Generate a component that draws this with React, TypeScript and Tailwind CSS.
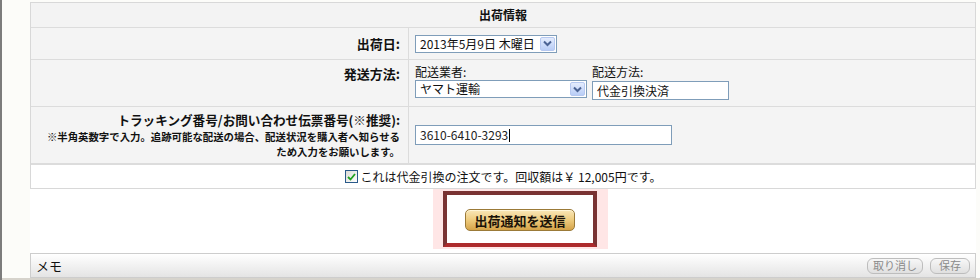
import React from "react";

const font = { fontFamily: '"Noto Sans CJK JP", "Noto Sans", sans-serif' };

const Arrow = () => (
	<span className="flex h-[14px] w-[15px] items-center justify-center rounded-[2px] border border-[#b6c8f0] bg-gradient-to-b from-[#e4ecfd] to-[#b9cdf6]">
		<svg width="9" height="7" viewBox="0 0 9 7">
			<path d="M1 1.5 L4.5 5 L8 1.5" fill="none" stroke="#4b6394" strokeWidth="2" />
		</svg>
	</span>
);

const Select = ({ value, width }: { value: string; width: string }) => (
	<div className={`flex h-[18px] items-center justify-between border border-[#7f9db9] bg-white pl-[4px] pr-[1px] ${width}`}>
		<span className="text-[12px] leading-none text-[#111]">{value}</span>
		<Arrow />
	</div>
);

const App = () => {
	return (
		<div style={font} className="flex h-[280px] w-[980px] flex-col overflow-hidden border-l-2 border-[#7c7c7c] bg-[#fcfcf9]">
			<div className="flex flex-1 flex-col pl-[28px] pr-[4px]">
				{/* table */}
				<div className="mt-[2px] border border-[#d8d8d8] bg-white">
					<div className="flex h-[25px] items-center justify-center border-b border-[#dcdcdc] bg-[#f3f3f3] text-[12px] font-bold text-[#111]">
						出荷情報
					</div>

					<div className="grid h-[32px] grid-cols-[378px_1fr] border-b border-[#dcdcdc] bg-[#f4f4f4]">
						<div className="flex items-center justify-end border-r border-[#dcdcdc] pr-[8px] text-[13px] font-bold text-[#111]">出荷日:</div>
						<div className="flex items-center pl-[6px]">
							<Select value="2013年5月9日 木曜日" width="w-[142px]" />
						</div>
					</div>

					<div className="grid h-[47px] grid-cols-[378px_1fr] border-b border-[#dcdcdc] bg-[#f4f4f4]">
						<div className="flex items-start justify-end border-r border-[#dcdcdc] pr-[8px] pt-[4px] text-[13px] font-bold text-[#111]">発送方法:</div>
						<div className="flex items-start gap-[5px] pl-[6px] pt-[3px]">
							<div className="flex flex-col">
								<span className="h-[17px] text-[12px] leading-[17px] text-[#111]">配送業者:</span>
								<Select value="ヤマト運輸" width="w-[172px]" />
							</div>
							<div className="flex flex-col">
								<span className="h-[17px] text-[12px] leading-[17px] text-[#111]">配送方法:</span>
								<div className="mt-[1px] flex h-[19px] w-[137px] items-center border border-[#7f9db9] bg-white pl-[4px] text-[12px] text-[#111]">代金引換決済</div>
							</div>
						</div>
					</div>

					<div className="grid h-[58px] grid-cols-[378px_1fr] border-b-2 border-[#dcdcdc] bg-[#f4f4f4]">
						<div className="flex flex-col items-end justify-center border-r border-[#dcdcdc] pr-[8px] text-right text-[#111]">
							<span className="text-[12.6px] font-bold leading-[18px]">トラッキング番号/お問い合わせ伝票番号(※推奨):</span>
							<span className="text-[10.4px] font-bold leading-[15px]">※半角英数字で入力。追跡可能な配送の場合、配送状況を購入者へ知らせる</span>
							<span className="text-[10.4px] font-bold leading-[15px]">ため入力をお願いします。</span>
						</div>
						<div className="flex items-center pl-[6px]">
							<div className="flex h-[20px] w-[257px] items-center border border-[#7f9db9] bg-white pl-[4px] text-[12px] text-[#222]">
								3610-6410-3293<span className="ml-[1px] h-[13px] w-px bg-black" />
							</div>
						</div>
					</div>

					<div className="flex h-[23px] items-center justify-center gap-[3px] bg-white text-[12px] text-[#111]">
						<span className="flex h-[13px] w-[13px] items-center justify-center border border-[#2a5a8a] bg-gradient-to-br from-[#dcdcd6] to-white">
							<svg width="9" height="8" viewBox="0 0 9 8">
								<path d="M1 4 L3.5 6.5 L8 1" fill="none" stroke="#21a121" strokeWidth="1.8" />
							</svg>
						</span>
						<span>これは代金引換の注文です。回収額は￥ 12,005円です。</span>
					</div>
				</div>

				{/* submit */}
				<div className="flex h-[64px] bg-white pl-[403px]">
					<div className="h-[60px] w-[175px] bg-[#ffe6e6] pl-[10px] pt-[2px]">
						<div className="flex h-[56px] w-[154px] justify-center border-4 border-[#7a3333] border-b-[#ad2a2c] bg-white pt-[14px]">
							<button className="h-[22px] w-[110px] rounded-[5px] border border-[#9b7a38] bg-gradient-to-b from-[#f9e7b8] via-[#eecb7d] to-[#d5a348] text-[13px] font-bold leading-none text-[#1a1208] shadow-[inset_0_1px_0_#fff6d8]">
								出荷通知を送信
							</button>
						</div>
					</div>
				</div>

				{/* memo bar */}
				<div className="flex h-[25px] items-center justify-between border border-[#cdcdcd] bg-gradient-to-b from-[#ffffff] to-[#e4e4e4] pl-[5px] pr-[5px]">
					<span className="text-[13px] text-[#111]">メモ</span>
					<div className="flex gap-[7px]">
						<button className="h-[16px] w-[56px] rounded-[6px] border border-[#bdbdbd] bg-gradient-to-b from-[#f7f7f7] to-[#e0e0e0] text-[11px] leading-none text-[#8a8a8a]">取り消し</button>
						<button className="h-[16px] w-[40px] rounded-[6px] border border-[#bdbdbd] bg-gradient-to-b from-[#f7f7f7] to-[#e0e0e0] text-[11px] leading-none text-[#8a8a8a]">保存</button>
					</div>
				</div>
			</div>
			<div className="h-[3px] bg-[#d6d3cc]" />
		</div>
	);
};

export default App;
